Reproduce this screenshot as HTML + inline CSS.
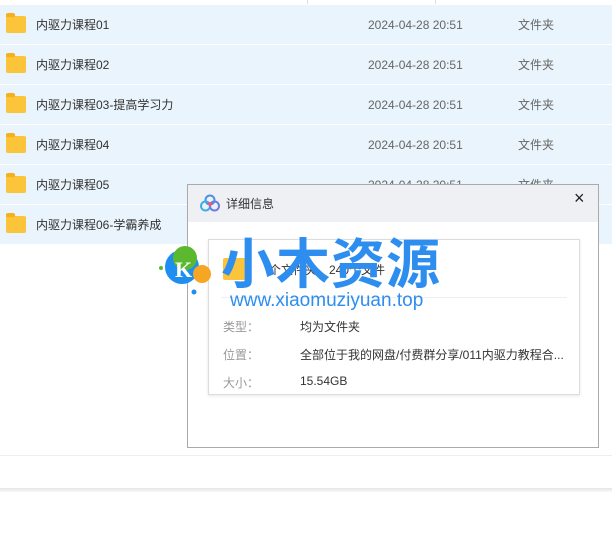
<!DOCTYPE html>
<html><head><meta charset="utf-8"><style>
body{margin:0;width:612px;height:545px;background:#fff;position:relative;overflow:hidden;font-family:"Liberation Sans","Noto Sans CJK SC",sans-serif;}
.row{position:absolute;left:0;width:612px;height:39px;line-height:40px;background:#e9f4fc;font-size:12px;color:#333;}
.row .f{position:absolute;left:6px;top:11px;width:20px;height:17px;background:#fcc43a;border-radius:2px;}
.row .f:before{content:"";position:absolute;left:0;top:-3px;width:9px;height:4px;background:#f5b01c;border-radius:2px 2px 0 0;}
.row span{position:absolute;top:0;}
.row .n{left:36px;}
.row .d{left:368px;color:#666;}
.row .t{left:518px;color:#666;}
.dlg{position:absolute;left:187px;top:184px;width:410px;height:262px;border:1px solid #aaa;background:#fff;}
.tb{height:37px;background:#eef0f4;font-size:12px;color:#333;}
.box{position:absolute;left:20px;top:54px;width:370px;height:154px;border:1px solid #ddd;box-shadow:0 1px 3px rgba(0,0,0,.1);}
.lab{position:absolute;font-size:12px;color:#999;}
.val{position:absolute;font-size:12px;color:#333;}
</style></head><body>
<div style="position:absolute;left:307px;top:0;width:1px;height:4px;background:#ddd"></div>
<div style="position:absolute;left:435px;top:0;width:1px;height:4px;background:#ddd"></div>
<div class="row" style="top:5px"><div class="f"></div><span class="n">内驱力课程01</span><span class="d">2024-04-28 20:51</span><span class="t">文件夹</span></div>
<div class="row" style="top:45px"><div class="f"></div><span class="n">内驱力课程02</span><span class="d">2024-04-28 20:51</span><span class="t">文件夹</span></div>
<div class="row" style="top:85px"><div class="f"></div><span class="n">内驱力课程03-提高学习力</span><span class="d">2024-04-28 20:51</span><span class="t">文件夹</span></div>
<div class="row" style="top:125px"><div class="f"></div><span class="n">内驱力课程04</span><span class="d">2024-04-28 20:51</span><span class="t">文件夹</span></div>
<div class="row" style="top:165px"><div class="f"></div><span class="n">内驱力课程05</span><span class="d">2024-04-28 20:51</span><span class="t">文件夹</span></div>
<div class="row" style="top:205px"><div class="f"></div><span class="n">内驱力课程06-学霸养成</span></div>
<div style="position:absolute;left:0;top:455px;width:612px;height:1px;background:#eee"></div>
<div style="position:absolute;left:0;top:488px;width:612px;height:4px;background:linear-gradient(#e4e4e4,#f8f8f8)"></div>
<div class="dlg">
<div class="tb">
<svg style="position:absolute;left:12px;top:9px" width="20" height="18" viewBox="0 0 20 18"><circle cx="10" cy="6" r="4.5" fill="none" stroke="#4a90e2" stroke-width="2"/><circle cx="5.5" cy="12" r="4.5" fill="none" stroke="#3ab0e8" stroke-width="2"/><circle cx="14.5" cy="12" r="4.5" fill="none" stroke="#6a7ee0" stroke-width="2"/><circle cx="10" cy="10" r="2" fill="#e85a8a"/></svg>
<span style="position:absolute;left:38px;top:10px">详细信息</span>
<span style="position:absolute;left:386px;top:3px;font-size:18px;color:#222">×</span>
</div>
<div class="box">
<div style="position:absolute;left:14px;top:18px;width:26px;height:22px;background:#fcc43a;border-radius:2px"></div>
<span class="val" style="left:60px;top:21px">个文件夹，240个文件</span>
<div style="position:absolute;left:12px;top:57px;width:346px;height:1px;background:#eee"></div>
<span class="lab" style="left:14px;top:78px">类型：</span><span class="val" style="left:91px;top:78px">均为文件夹</span>
<span class="lab" style="left:14px;top:106px">位置：</span><span class="val" style="left:91px;top:106px">全部位于我的网盘/付费群分享/011内驱力教程合...</span>
<span class="lab" style="left:14px;top:134px">大小：</span><span class="val" style="left:91px;top:134px">15.54GB</span>
</div>
</div>
<svg style="position:absolute;left:158px;top:244px" width="60" height="58"><circle cx="24" cy="23" r="17" fill="#1e8ff0"/><circle cx="27" cy="14" r="12" fill="#5cb82e"/><circle cx="44" cy="30" r="9" fill="#f5a623"/><circle cx="3" cy="24" r="2" fill="#5cb82e"/><circle cx="36" cy="48" r="2.5" fill="#1e8ff0"/><text x="17" y="33" font-family="Liberation Serif" font-weight="bold" font-size="22" fill="#fff">K</text></svg>
<div style="position:absolute;left:221px;top:230px;font-size:54px;font-weight:bold;color:#2d8ef0;letter-spacing:1px;font-family:'Noto Sans CJK SC',sans-serif;line-height:60px">小木资源</div>
<div style="position:absolute;left:230px;top:290px;font-size:19px;color:#2d8ef0">www.xiaomuziyuan.top</div>
</body></html>
